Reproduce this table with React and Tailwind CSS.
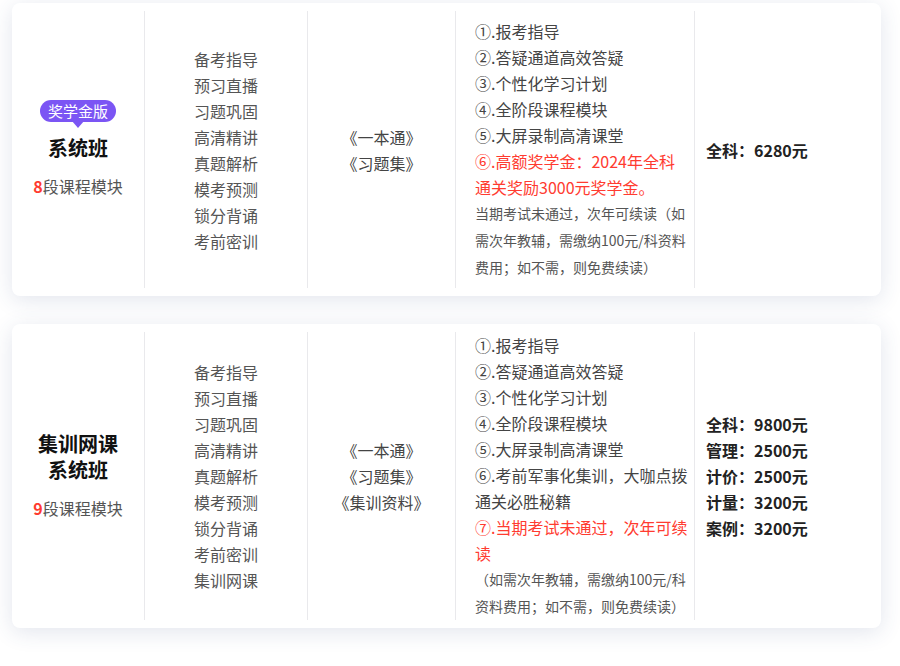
import React from 'react';

const modules1 = ['备考指导', '预习直播', '习题巩固', '高清精讲', '真题解析', '模考预测', '锁分背诵', '考前密训'];
const modules2 = [...modules1, '集训网课'];

const Cell = ({ className = '', children }) => (
  <div className={`flex items-center border-l border-[#e9e9ec] ${className}`}>{children}</div>
);

const Card = ({ className = '', left, modules, books, services, prices }) => (
  <div className={`ml-3 w-[869px] bg-white rounded-lg shadow-[0_4px_22px_rgba(50,70,130,0.14)] flex py-2 ${className}`}>
    <div className="w-[132px] flex flex-col items-center justify-center">{left}</div>
    <Cell className="w-[163px] justify-center">
      <ul className="text-[16px] leading-[26px] text-[#555]">
        {modules.map((m) => (
          <li key={m}>{m}</li>
        ))}
      </ul>
    </Cell>
    <Cell className="w-[148px] justify-center">
      <div className="text-[16px] leading-[26px] text-[#444] text-center">
        {books.map((b) => (
          <div key={b}>{b}</div>
        ))}
      </div>
    </Cell>
    <Cell className="w-[239px] pl-[19px]">
      <div className="whitespace-nowrap">{services}</div>
    </Cell>
    <Cell className="flex-1 pl-[11px]">
      <div className="text-[16px] leading-[26px] font-bold text-[#222]">
        {prices.map((p) => (
          <div key={p}>{p}</div>
        ))}
      </div>
    </Cell>
  </div>
);

const L = ({ red, children }) => (
  <div className={`text-[16px] leading-[26px] ${red ? 'text-[#ff3b30]' : 'text-[#444]'}`}>{children}</div>
);
const S = ({ children }) => <div className="text-[14px] leading-[27px] text-[#555]">{children}</div>;

export default function App() {
  return (
    <div
      className="w-[900px] h-[666px] bg-white pt-[3px] flex flex-col gap-7"
      style={{ fontFamily: '"Noto Sans CJK SC", "Noto Sans", sans-serif' }}
    >
      <Card
        className="min-h-[293px]"
        left={
          <>
            <div className="relative bg-[#7b55f4] text-white text-[15px] leading-[22px] px-[8px] rounded-full">
              奖学金版
              <span className="absolute left-1/2 -bottom-[6px] -translate-x-1/2 w-0 h-0 border-x-[6px] border-x-transparent border-t-[7px] border-t-[#7b55f4]" />
            </div>
            <div className="mt-[13px] text-[20px] leading-[26px] font-bold text-[#111]">系统班</div>
            <div className="mt-3 text-[16px] leading-[26px] text-[#555]">
              <span className="font-bold text-[#ff3b30]">8</span>段课程模块
            </div>
          </>
        }
        modules={modules1}
        books={['《一本通》', '《习题集》']}
        services={
          <>
            <L>①.报考指导</L>
            <L>②.答疑通道高效答疑</L>
            <L>③.个性化学习计划</L>
            <L>④.全阶段课程模块</L>
            <L>⑤.大屏录制高清课堂</L>
            <L red>⑥.高额奖学金：2024年全科</L>
            <L red>通关奖励3000元奖学金。</L>
            <S>当期考试未通过，次年可续读（如</S>
            <S>需次年教辅，需缴纳100元/科资料</S>
            <S>费用；如不需，则免费续读）</S>
          </>
        }
        prices={['全科：6280元']}
      />
      <Card
        left={
          <>
            <div className="text-[20px] leading-[26px] font-bold text-[#111] text-center">
              <div>集训网课</div>
              <div>系统班</div>
            </div>
            <div className="mt-3 text-[16px] leading-[26px] text-[#555]">
              <span className="font-bold text-[#ff3b30]">9</span>段课程模块
            </div>
          </>
        }
        modules={modules2}
        books={['《一本通》', '《习题集》', '《集训资料》']}
        services={
          <>
            <L>①.报考指导</L>
            <L>②.答疑通道高效答疑</L>
            <L>③.个性化学习计划</L>
            <L>④.全阶段课程模块</L>
            <L>⑤.大屏录制高清课堂</L>
            <L>⑥.考前军事化集训，大咖点拨</L>
            <L>通关必胜秘籍</L>
            <L red>⑦.当期考试未通过，次年可续</L>
            <L red>读</L>
            <S>（如需次年教辅，需缴纳100元/科</S>
            <S>资料费用；如不需，则免费续读）</S>
          </>
        }
        prices={['全科：9800元', '管理：2500元', '计价：2500元', '计量：3200元', '案例：3200元']}
      />
    </div>
  );
}
